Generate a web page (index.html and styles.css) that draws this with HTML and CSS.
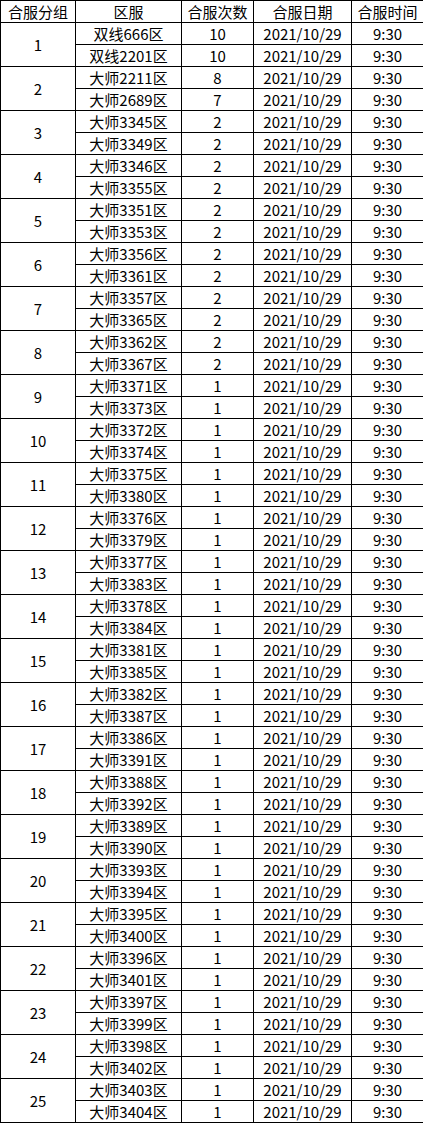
FILE: index.html
```html
<!DOCTYPE html>
<html lang="zh-CN">
<head>
<meta charset="utf-8">
<title>合服安排</title>
<link rel="stylesheet" href="styles.css">
</head>
<body>
<table class="merge">
<colgroup>
<col class="c1"><col class="c2"><col class="c3"><col class="c4"><col class="c5">
</colgroup>
<thead>
<tr><th>合服分组</th><th>区服</th><th>合服次数</th><th>合服日期</th><th>合服时间</th></tr>
</thead>
<tbody>
<tr><td rowspan="2">1</td><td>双线666区</td><td>10</td><td>2021/10/29</td><td>9:30</td></tr>
<tr><td>双线2201区</td><td>10</td><td>2021/10/29</td><td>9:30</td></tr>
<tr><td rowspan="2">2</td><td>大师2211区</td><td>8</td><td>2021/10/29</td><td>9:30</td></tr>
<tr><td>大师2689区</td><td>7</td><td>2021/10/29</td><td>9:30</td></tr>
<tr><td rowspan="2">3</td><td>大师3345区</td><td>2</td><td>2021/10/29</td><td>9:30</td></tr>
<tr><td>大师3349区</td><td>2</td><td>2021/10/29</td><td>9:30</td></tr>
<tr><td rowspan="2">4</td><td>大师3346区</td><td>2</td><td>2021/10/29</td><td>9:30</td></tr>
<tr><td>大师3355区</td><td>2</td><td>2021/10/29</td><td>9:30</td></tr>
<tr><td rowspan="2">5</td><td>大师3351区</td><td>2</td><td>2021/10/29</td><td>9:30</td></tr>
<tr><td>大师3353区</td><td>2</td><td>2021/10/29</td><td>9:30</td></tr>
<tr><td rowspan="2">6</td><td>大师3356区</td><td>2</td><td>2021/10/29</td><td>9:30</td></tr>
<tr><td>大师3361区</td><td>2</td><td>2021/10/29</td><td>9:30</td></tr>
<tr><td rowspan="2">7</td><td>大师3357区</td><td>2</td><td>2021/10/29</td><td>9:30</td></tr>
<tr><td>大师3365区</td><td>2</td><td>2021/10/29</td><td>9:30</td></tr>
<tr><td rowspan="2">8</td><td>大师3362区</td><td>2</td><td>2021/10/29</td><td>9:30</td></tr>
<tr><td>大师3367区</td><td>2</td><td>2021/10/29</td><td>9:30</td></tr>
<tr><td rowspan="2">9</td><td>大师3371区</td><td>1</td><td>2021/10/29</td><td>9:30</td></tr>
<tr><td>大师3373区</td><td>1</td><td>2021/10/29</td><td>9:30</td></tr>
<tr><td rowspan="2">10</td><td>大师3372区</td><td>1</td><td>2021/10/29</td><td>9:30</td></tr>
<tr><td>大师3374区</td><td>1</td><td>2021/10/29</td><td>9:30</td></tr>
<tr><td rowspan="2">11</td><td>大师3375区</td><td>1</td><td>2021/10/29</td><td>9:30</td></tr>
<tr><td>大师3380区</td><td>1</td><td>2021/10/29</td><td>9:30</td></tr>
<tr><td rowspan="2">12</td><td>大师3376区</td><td>1</td><td>2021/10/29</td><td>9:30</td></tr>
<tr><td>大师3379区</td><td>1</td><td>2021/10/29</td><td>9:30</td></tr>
<tr><td rowspan="2">13</td><td>大师3377区</td><td>1</td><td>2021/10/29</td><td>9:30</td></tr>
<tr><td>大师3383区</td><td>1</td><td>2021/10/29</td><td>9:30</td></tr>
<tr><td rowspan="2">14</td><td>大师3378区</td><td>1</td><td>2021/10/29</td><td>9:30</td></tr>
<tr><td>大师3384区</td><td>1</td><td>2021/10/29</td><td>9:30</td></tr>
<tr><td rowspan="2">15</td><td>大师3381区</td><td>1</td><td>2021/10/29</td><td>9:30</td></tr>
<tr><td>大师3385区</td><td>1</td><td>2021/10/29</td><td>9:30</td></tr>
<tr><td rowspan="2">16</td><td>大师3382区</td><td>1</td><td>2021/10/29</td><td>9:30</td></tr>
<tr><td>大师3387区</td><td>1</td><td>2021/10/29</td><td>9:30</td></tr>
<tr><td rowspan="2">17</td><td>大师3386区</td><td>1</td><td>2021/10/29</td><td>9:30</td></tr>
<tr><td>大师3391区</td><td>1</td><td>2021/10/29</td><td>9:30</td></tr>
<tr><td rowspan="2">18</td><td>大师3388区</td><td>1</td><td>2021/10/29</td><td>9:30</td></tr>
<tr><td>大师3392区</td><td>1</td><td>2021/10/29</td><td>9:30</td></tr>
<tr><td rowspan="2">19</td><td>大师3389区</td><td>1</td><td>2021/10/29</td><td>9:30</td></tr>
<tr><td>大师3390区</td><td>1</td><td>2021/10/29</td><td>9:30</td></tr>
<tr><td rowspan="2">20</td><td>大师3393区</td><td>1</td><td>2021/10/29</td><td>9:30</td></tr>
<tr><td>大师3394区</td><td>1</td><td>2021/10/29</td><td>9:30</td></tr>
<tr><td rowspan="2">21</td><td>大师3395区</td><td>1</td><td>2021/10/29</td><td>9:30</td></tr>
<tr><td>大师3400区</td><td>1</td><td>2021/10/29</td><td>9:30</td></tr>
<tr><td rowspan="2">22</td><td>大师3396区</td><td>1</td><td>2021/10/29</td><td>9:30</td></tr>
<tr><td>大师3401区</td><td>1</td><td>2021/10/29</td><td>9:30</td></tr>
<tr><td rowspan="2">23</td><td>大师3397区</td><td>1</td><td>2021/10/29</td><td>9:30</td></tr>
<tr><td>大师3399区</td><td>1</td><td>2021/10/29</td><td>9:30</td></tr>
<tr><td rowspan="2">24</td><td>大师3398区</td><td>1</td><td>2021/10/29</td><td>9:30</td></tr>
<tr><td>大师3402区</td><td>1</td><td>2021/10/29</td><td>9:30</td></tr>
<tr><td rowspan="2">25</td><td>大师3403区</td><td>1</td><td>2021/10/29</td><td>9:30</td></tr>
<tr><td>大师3404区</td><td>1</td><td>2021/10/29</td><td>9:30</td></tr>
</tbody>
</table>
</body>
</html>
```

FILE: styles.css
```css
html, body {
  margin: 0;
  padding: 0;
  background: #ffffff;
}

.merge {
  border-collapse: collapse;
  table-layout: fixed;
  width: 423px;
  font-family: "Noto Sans CJK SC", "Noto Sans", sans-serif;
  font-size: 15px;
  color: #000000;
}

.c1 { width: 75px; }
.c2 { width: 106px; }
.c3 { width: 72px; }
.c4 { width: 98px; }
.c5 { width: 72px; }

.merge th,
.merge td {
  border: 1px solid #000000;
  padding: 0;
  height: 21px;
  line-height: 21px;
  text-align: center;
  vertical-align: middle;
  font-weight: normal;
  white-space: nowrap;
  overflow: hidden;
}
```
